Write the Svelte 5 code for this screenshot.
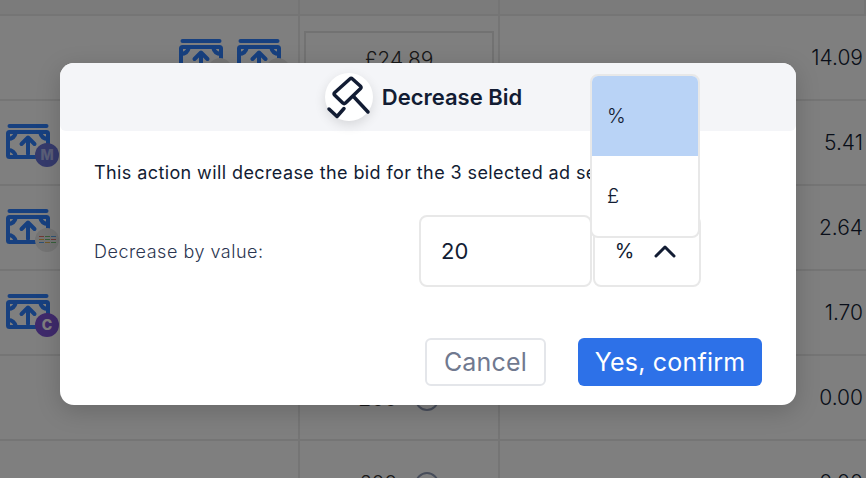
<script lang="ts">
  interface Row {
    icons: string[];
    bid?: string;
    help?: boolean;
    value: string;
  }

  const rows: Row[] = [
    { icons: ["multi", "multi"], bid: "£24.89", value: "14.09" },
    { icons: ["m"], value: "5.41" },
    { icons: ["multi"], value: "2.64" },
    { icons: ["c"], value: "1.70" },
    { icons: [], bid: "£00", help: true, value: "0.00" },
    { icons: [], bid: "£00", help: true, value: "0.00" }
  ];

  const dots = ["#e0706a", "#6fbf77", "#5fa4e8", "#e8b04a", "#6fbf77", "#e0706a", "#5fa4e8", "#e8b04a", "#6fbf77"];
</script>

<div class="page">
  <div class="table">
    <div class="head"><span></span><span></span><span></span></div>
    {#each rows as row, i}
      <div class="row">
        <div class="cell icons" class:end={row.icons.length > 1}>
          {#each row.icons as kind}
            <div class="money">
              <svg width="44" height="36" viewBox="0 0 44 36" fill="none" stroke="#2f80ff" stroke-width="4" stroke-linecap="round" stroke-linejoin="round">
                <path d="M3.500 2h37" />
                <rect x="2" y="8" width="40" height="25" rx="1.500" />
                <path d="M2 15c4 0 7-2.500 8-7M42 15c-4 0-7-2.500-8-7M2 26c4 0 7 2.500 8 7M42 26c-4 0-7 2.500-8 7" />
                <path d="M22 30V14M15.500 20l6.500-6.500 6.500 6.500" />
              </svg>
              {#if kind === "m"}
                <span class="badge m">M</span>
              {:else if kind === "c"}
                <span class="badge c">C</span>
              {:else}
                <span class="badge multi">
                  {#each dots as d}<i style="background:{d}"></i>{/each}
                </span>
              {/if}
            </div>
          {/each}
        </div>
        <div class="cell bid">
          {#if i === 0}
            <div class="bid-box">{row.bid}</div>
          {:else if row.bid}
            <span>{row.bid}</span>
            {#if row.help}<span class="help"></span>{/if}
          {/if}
        </div>
        <div class="cell value">{row.value}</div>
      </div>
    {/each}
  </div>

  <div class="backdrop"></div>

  <div class="modal">
    <header>
      <span class="logo">
        <svg width="48" height="48" viewBox="0 0 48 48" fill="none" stroke="#121c33" stroke-width="3.500" stroke-linecap="round" stroke-linejoin="round">
          <path d="M9.800 19.500L24.800 6a2 2 0 0 1 2.700 0l7.800 7a2 2 0 0 1 0 2.800L20.500 30a2 2 0 0 1-2.700 0l-8-7.700a2 2 0 0 1 0-2.800z" />
          <path d="M29 24l14 15" />
          <path d="M4 36l8 7.500 7-8" />
        </svg>
      </span>
      <h2>Decrease Bid</h2>
    </header>

    <p class="message">This action will decrease the bid for the 3 selected ad sets.</p>

    <div class="field">
      <label for="bid-value">Decrease by value:</label>
      <input id="bid-value" value="20" />
      <div class="select">
        <span>%</span>
        <svg width="22" height="14" viewBox="0 0 22 14" fill="none" stroke="#121c33" stroke-width="3" stroke-linecap="round" stroke-linejoin="round">
          <path d="M2 12l9-9 9 9" />
        </svg>
      </div>
    </div>

    <div class="actions">
      <button class="cancel">Cancel</button>
      <button class="confirm">Yes, confirm</button>
    </div>

    <ul class="menu">
      <li class="active">%</li>
      <li>£</li>
    </ul>
  </div>
</div>

<style>
  :global(body) {
    margin: 0;
    font-family: "Inter", "Liberation Sans", sans-serif;
  }

  .page {
    position: relative;
    width: 866px;
    height: 478px;
    overflow: hidden;
    background: #fff;
    color: #121c33;
  }

  .head {
    height: 14px;
    background: #f6f6f6;
    border-bottom: 2px solid #ebebeb;
    display: grid;
    grid-template-columns: 300px 200px 1fr;
  }

  .head span {
    border-right: 2px solid #ebebeb;
  }

  .row {
    display: grid;
    grid-template-columns: 300px 200px 1fr;
    height: 83px;
    border-bottom: 2px solid #ebebeb;
  }

  .cell {
    display: flex;
    align-items: center;
    border-right: 2px solid #ebebeb;
  }

  .icons {
    gap: 14px;
    padding: 0 14px 0 6px;
  }

  .icons.end {
    justify-content: flex-end;
    padding-right: 17px;
  }

  .money {
    position: relative;
    width: 44px;
    height: 36px;
    margin-top: -2px;
  }

  .money svg {
    display: block;
  }

  .badge {
    position: absolute;
    right: -9px;
    bottom: -7px;
    width: 24px;
    height: 24px;
    border-radius: 50%;
    display: flex;
    align-items: center;
    justify-content: center;
    font-size: 14px;
    font-weight: 800;
  }

  .badge.m {
    background: #6a74d8;
    color: #b4bdf0;
  }

  .badge.c {
    background: #7f54d8;
    color: #fff;
  }

  .badge.multi {
    background: #e8e8e8;
    gap: 2px 1px;
    flex-wrap: wrap;
    align-content: center;
    padding: 0 3px;
    box-sizing: border-box;
  }

  .badge.multi i {
    width: 5px;
    height: 1px;
  }

  .bid {
    justify-content: center;
    gap: 18px;
    font-size: 21px;
    font-weight: 300;
    padding: 2px 4px 0;
    color: #333;
  }

  .bid-box {
    box-sizing: border-box;
    width: 192px;
    height: 58px;
    margin-top: 2px;
    border: 2px solid #e4e4e4;
    display: flex;
    align-items: center;
    justify-content: center;
  }

  .help {
    width: 24px;
    height: 24px;
    border: 2px solid #8f9ab5;
    border-radius: 50%;
    box-sizing: border-box;
  }

  .value {
    justify-content: flex-end;
    border-right: 0;
    padding-right: 3px;
    font-size: 21px;
    font-weight: 300;
  }

  .backdrop {
    position: absolute;
    inset: 0;
    background: rgba(0, 0, 0, 0.5);
  }

  .modal {
    position: absolute;
    left: 60px;
    top: 63px;
    width: 736px;
    height: 342px;
    box-sizing: border-box;
    background: #fff;
    border-radius: 14px;
    box-shadow: 0 6px 24px rgba(0, 0, 0, 0.18);
  }

  header {
    height: 68px;
    box-sizing: border-box;
    background: #f4f5f8;
    border-radius: 14px 14px 6px 6px;
    display: flex;
    align-items: center;
    justify-content: center;
    gap: 9px;
    padding-right: 9px;
  }

  .logo {
    width: 48px;
    height: 48px;
    border-radius: 50%;
    background: #fff;
    box-shadow: 0 4px 12px rgba(0, 0, 0, 0.12);
  }

  .logo svg {
    display: block;
  }

  h2 {
    margin: 0;
    font-size: 22px;
    font-weight: 600;
  }

  .message {
    margin: 29px 0 0 34px;
    font-size: 18px;
    line-height: 26px;
    letter-spacing: 0.4px;
    white-space: nowrap;
    overflow: hidden;
    width: 640px;
  }

  .field {
    display: flex;
    align-items: stretch;
    height: 72px;
    margin: 29px 0 0 34px;
  }

  label {
    width: 325px;
    align-self: center;
    font-size: 18px;
    font-weight: 300;
    letter-spacing: 0.5px;
    color: #2b3550;
  }

  input {
    box-sizing: border-box;
    width: 173px;
    border: 2px solid #e8e8e8;
    border-radius: 8px;
    padding: 0 20px;
    font: inherit;
    font-size: 22px;
    color: #121c33;
    outline: none;
  }

  .select {
    box-sizing: border-box;
    width: 108px;
    margin-left: 1px;
    padding-right: 3px;
    border: 2px solid #e8e8e8;
    border-radius: 8px;
    display: flex;
    align-items: center;
    justify-content: center;
    gap: 20px;
    font-size: 20px;
  }

  .actions {
    display: flex;
    justify-content: flex-end;
    gap: 32px;
    margin: 51px 34px 0 0;
  }

  button {
    height: 48px;
    font: inherit;
    font-size: 25px;
    letter-spacing: 0.2px;
    border-radius: 6px;
  }

  .cancel {
    box-sizing: border-box;
    width: 121px;
    background: #fff;
    border: 2px solid #e4e6ea;
    color: #70798f;
  }

  .confirm {
    width: 184px;
    background: #2d71e8;
    border: 0;
    color: #fff;
  }

  .menu {
    position: absolute;
    left: 530px;
    top: 11px;
    width: 110px;
    box-sizing: border-box;
    margin: 0;
    padding: 0;
    list-style: none;
    background: #fff;
    border: 2px solid #e8e8e8;
    border-radius: 8px;
    overflow: hidden;
  }

  .menu li {
    height: 80px;
    padding: 0 0 0 15px;
    box-sizing: border-box;
    display: flex;
    align-items: center;
    font-size: 20px;
    font-weight: 300;
  }

  .menu li.active {
    background: #b9d3f6;
  }
</style>
